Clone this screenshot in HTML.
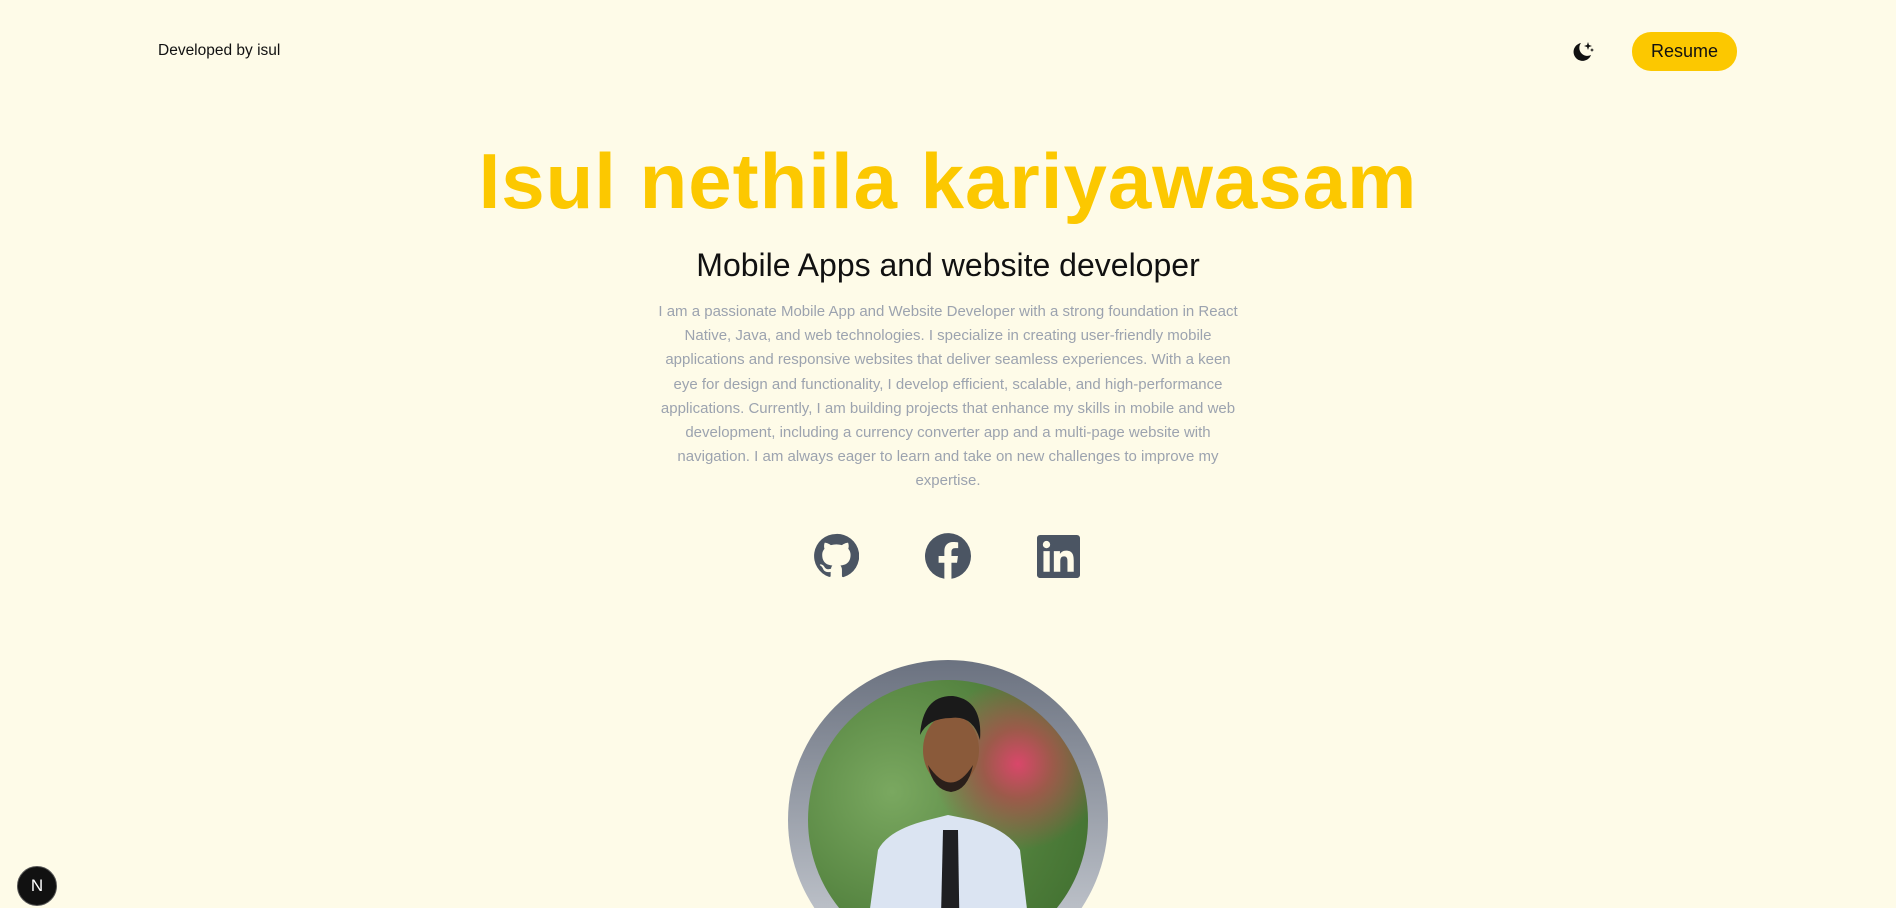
<!DOCTYPE html>
<html><head><meta charset="utf-8"><style>
html,body{margin:0;padding:0;width:1896px;height:908px;overflow:hidden;background:#fefbe8;font-family:"Liberation Sans",sans-serif;position:relative}
.abs{position:absolute}
#dev{left:158px;top:42px;font-size:15.5px;color:#111}
#res{left:1632px;top:32px;width:105px;height:39px;border-radius:19px;background:#fcc800;color:#111;font-size:18px;line-height:39px;text-align:center}
h1{position:absolute;left:0;width:1896px;top:136px;margin:0;text-align:center;font-size:78px;font-weight:700;color:#fcc800;letter-spacing:1px}
h2{position:absolute;left:0;width:1896px;top:247px;margin:0;text-align:center;font-size:32px;font-weight:400;color:#111}
p{position:absolute;left:658px;width:580px;top:300px;margin:0;text-align:center;font-size:15px;line-height:24.2px;color:#9ca3af}
.ic{position:absolute;top:533px;width:46px;height:46px}
#ring{left:788px;top:660px;width:320px;height:320px;border-radius:50%;background:linear-gradient(#6b7280,#d1d5db)}
#photo{left:808px;top:680px;width:280px;height:280px;border-radius:50%;overflow:hidden;background:radial-gradient(circle at 75% 30%,#d9476a 0,#9c5a4a 12%,transparent 30%),radial-gradient(circle at 30% 40%,#7aa860,#4e7d3a 60%,#3b6a2c)}
#n{left:17px;top:866px;width:38px;height:38px;border-radius:50%;background:#111;border:1px solid #555;color:#fff;font-size:17px;line-height:38px;text-align:center}
#clip{position:absolute;left:0;top:0;width:1896px;height:908px;overflow:hidden}
</style></head><body><div id="clip">
<div id="dev" class="abs">Developed by isul</div>
<svg class="abs" style="left:1570px;top:39px" width="26" height="26" viewBox="0 0 26 26"><path d="M11 4a9 9 0 1 0 10 12a8 8 0 0 1-10-12z" fill="#111"/><path d="M18 3l1 3l3 1l-3 1l-1 3l-1-3l-3-1l3-1z M22 9l.6 1.4l1.4.6l-1.4.6l-.6 1.4l-.6-1.4l-1.4-.6l1.4-.6z" fill="#111"/></svg>
<div id="res" class="abs">Resume</div>
<h1>Isul nethila kariyawasam</h1>
<h2>Mobile Apps and website developer</h2>
<p>I am a passionate Mobile App and Website Developer with a strong foundation in React Native, Java, and web technologies. I specialize in creating user-friendly mobile applications and responsive websites that deliver seamless experiences. With a keen eye for design and functionality, I develop efficient, scalable, and high-performance applications. Currently, I am building projects that enhance my skills in mobile and web development, including a currency converter app and a multi-page website with navigation. I am always eager to learn and take on new challenges to improve my expertise.</p>
<svg class="ic" style="left:813px" viewBox="0 0 24 24"><path fill="#4b5563" d="M12 .5a11.5 11.5 0 0 0-3.6 22.4c.6.1.8-.2.8-.6v-2c-3.2.7-3.9-1.5-3.9-1.5-.5-1.3-1.300-1.700-1.3-1.7-1-.7.1-.7.1-.7 1.2.1 1.8 1.2 1.8 1.2 1 1.8 2.8 1.3 3.5 1 .1-.8.4-1.3.7-1.6-2.6-.3-5.3-1.300-5.3-5.7 0-1.3.5-2.3 1.2-3.1-.1-.3-.5-1.5.1-3.1 0 0 1-.3 3.2 1.2a11 11 0 0 1 5.8 0c2.2-1.5 3.2-1.2 3.2-1.2.6 1.6.2 2.8.1 3.1.7.8 1.2 1.9 1.2 3.1 0 4.4-2.7 5.4-5.3 5.700.4.4.8 1.1.8 2.2v3.2c0 .4.2.7.8.6A11.5 11.5 0 0 0 12 .5z"/></svg>
<svg class="ic" style="left:925px" viewBox="0 0 24 24"><path fill="#4b5563" d="M24 12a12 12 0 1 0-13.9 11.9v-8.4H7.1V12h3V9.4c0-3 1.8-4.7 4.5-4.7 1.3 0 2.7.2 2.7.2v3h-1.5c-1.5 0-2 .9-2 1.9V12h3.4l-.5 3.5h-2.9v8.4A12 12 0 0 0 24 12z"/></svg>
<svg class="ic" style="left:1037px;top:535px;width:43px;height:43px" viewBox="0 0 24 24"><path fill="#4b5563" d="M22.2 0H1.8C.8 0 0 .8 0 1.7v20.6c0 .9.8 1.7 1.8 1.7h20.4c1 0 1.8-.8 1.8-1.7V1.7C24 .8 23.2 0 22.2 0zM7.1 20.5H3.6V9h3.5v11.5zM5.3 7.4a2 2 0 1 1 0-4.1 2 2 0 0 1 0 4.1zm15.2 13.1H17v-5.6c0-1.3 0-3-1.9-3s-2.1 1.4-2.1 2.9v5.7H9.4V9h3.4v1.6c.5-.9 1.6-1.9 3.4-1.9 3.6 0 4.3 2.4 4.3 5.5v6.3z"/></svg>
<div id="ring" class="abs"></div>
<div id="photo" class="abs">
<svg width="280" height="280" viewBox="0 0 280 280"><path d="M55 280 L70 170 Q80 150 120 140 L140 135 L165 140 Q200 150 212 170 L225 280z" fill="#dbe4f2"/><path d="M135 150 L150 150 L152 280 L132 280z" fill="#1f1f22"/><ellipse cx="143" cy="70" rx="28" ry="36" fill="#8a5a3a"/><path d="M112 55 Q115 15 145 16 Q175 20 172 60 Q165 35 143 38 Q120 38 112 55z" fill="#1a1a1a"/><path d="M120 85 Q143 120 165 85 Q160 110 143 112 Q125 110 120 85z" fill="#2a1f1a"/></svg>
</div>
<div id="n" class="abs">N</div>
</div></body></html>
